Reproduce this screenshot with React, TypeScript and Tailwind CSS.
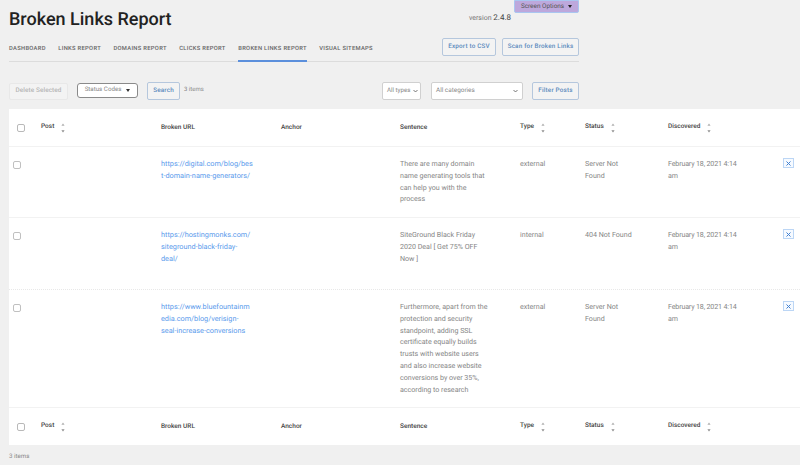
import React from "react";

const F = "font-['Roboto','Liberation_Sans',sans-serif] [text-rendering:geometricPrecision]";
const COLS = "grid-cols-[32px_120px_120px_119px_120px_65px_83px_115px_37px]";

function Sort() {
  return (
    <span className="flex flex-col items-center gap-[4px] w-[6px] mt-[1px]">
      <svg className="block" width="4" height="3" viewBox="0 0 4 3"><path d="M2 0.4 L3.6 2.8 L0.4 2.8 Z" fill="#b0b0b0" /></svg>
      <svg className="block" width="4" height="3" viewBox="0 0 4 3"><path d="M0.4 0.2 L3.6 0.2 L2 2.6 Z" fill="#8f8f8f" /></svg>
    </span>
  );
}

function Sortable({ label }: { label: string }) {
  return (
    <div className="flex items-start gap-[6px]">
      <span className="text-[6.5px] leading-[9px] text-[#444] font-medium">{label}</span>
      <Sort />
    </div>
  );
}

function HeadRow({ border, h }: { border: string; h: string }) {
  const t = "text-[6.5px] text-[#444] font-medium pt-[1px]";
  return (
    <div className={`grid ${COLS} ${h} items-center ${border}`}>
      <div className="pl-[8px]"><span className="block w-[8px] h-[8px] rounded-[2px] border border-[#b9b9b9] bg-white" /></div>
      <Sortable label="Post" />
      <div className={t}>Broken URL</div>
      <div className={t}>Anchor</div>
      <div className={t}>Sentence</div>
      <Sortable label="Type" />
      <Sortable label="Status" />
      <Sortable label="Discovered" />
      <div />
    </div>
  );
}

function Row({ url, sentence, type, status, h, border }: { url: string[]; sentence: string[]; type: string; status: string[]; h: string; border: string }) {
  const lines = (a: string[]) => a.map((l, i) => <div key={i}>{l}</div>);
  return (
    <div className={`grid ${COLS} pt-[11px] text-[7.1px] leading-[11.8px] text-[#858585] ${h} ${border}`}>
      <div className="pl-[4px] pt-[3px]"><span className="block w-[8px] h-[8px] rounded-[2px] border border-[#c0c0c0] bg-white" /></div>
      <div />
      <div className="text-[7.3px] text-[#5b9bec]">{lines(url)}</div>
      <div />
      <div>{lines(sentence)}</div>
      <div>{type}</div>
      <div>{lines(status)}</div>
      <div className="tracking-[-0.15px]">
        <div>February 18, 2021 4:14</div>
        <div>am</div>
      </div>
      <div>
        <span className="flex items-center justify-center w-[11px] h-[10px] border border-[#bcd6f5] bg-[#f6faff]">
          <svg className="block" width="5" height="5" viewBox="0 0 5 5"><path d="M0.5 0.5 L4.5 4.5 M4.5 0.5 L0.5 4.5" stroke="#3f7fd0" strokeWidth="1" /></svg>
        </span>
      </div>
    </div>
  );
}

function Btn({ children, w }: { children: React.ReactNode; w: string }) {
  return (
    <span className={`flex items-center justify-center h-[18px] ${w} rounded-[2px] border border-[#b5c7dd] text-[6.3px] tracking-[0.2px] font-medium text-[#5a8abd] bg-[#f3f3f3] whitespace-nowrap`}>
      {children}
    </span>
  );
}

function Chevron() {
  return <svg className="block shrink-0" width="5" height="4" viewBox="0 0 5 4"><path d="M0.5 1 L2.5 3 L4.5 1" fill="none" stroke="#555" strokeWidth="0.8" /></svg>;
}

export default function App() {
  const tab = "pt-[7px]";
  return (
    <div className={`relative w-[800px] h-[465px] overflow-hidden bg-[#f0f0f0] ${F}`}>
      <div className="absolute top-0 left-[514px] w-[65px] h-[13px] bg-[#bda8dc] border border-[#a9c6f0] rounded-b-[2px] flex items-center justify-center gap-[4px] text-[6.4px] text-[#555]">
        <span>Screen Options</span>
        <svg className="block" width="4" height="3" viewBox="0 0 4 3"><path d="M0 0 L4 0 L2 3 Z" fill="#222" /></svg>
      </div>

      <div className="flex flex-col w-[570px] ml-[9px]">
        <div className="flex justify-between h-[38px]">
          <h1 className="text-[18px] leading-[20px] mt-[10px] font-medium text-[#222]">Broken Links Report</h1>
          <div className="mt-[13px] mr-[68px] text-[7px] text-[#777] leading-[9px]">version <span className="text-[#444] text-[8px]">2.4.8</span></div>
        </div>
        <div className="flex justify-between items-start h-[24px] border-b border-[#dcdcdc]">
          <nav className="flex gap-[12.5px] text-[5.8px] tracking-[0.3px] uppercase text-[#666] font-medium h-[24px] whitespace-nowrap">
            <span className={tab}>Dashboard</span>
            <span className={tab}>Links Report</span>
            <span className={tab}>Domains Report</span>
            <span className={tab}>Clicks Report</span>
            <span className="pt-[7px] h-[24px] border-b-2 border-[#5b8fdc]">Broken Links Report</span>
            <span className={tab}>Visual Sitemaps</span>
          </nav>
          <div className="flex gap-[6px]">
            <Btn w="w-[54px]">Export to CSV</Btn>
            <Btn w="w-[77px]">Scan for Broken Links</Btn>
          </div>
        </div>

        <div className="flex items-center mt-[20px] h-[18px]">
          <span className="flex items-center justify-center w-[59px] h-[17px] rounded-[2px] border border-[#e8e8e8] bg-[#f3f3f3] text-[6.4px] tracking-[0.1px] font-medium text-[#b5b5b5] whitespace-nowrap">Delete Selected</span>
          <span className="ml-[9px] flex items-center justify-center gap-[5px] w-[61px] h-[15px] -mt-[2px] rounded-[3px] border border-[#8a8a8a] bg-white text-[6.2px] text-[#888] whitespace-nowrap">
            Status Codes
            <svg className="block" width="4" height="3" viewBox="0 0 4 3"><path d="M0 0 L4 0 L2 3 Z" fill="#333" /></svg>
          </span>
          <span className="ml-[9px]"><Btn w="w-[33px]">Search</Btn></span>
          <span className="ml-[4px] -mt-[4px] text-[6px] text-[#888]">3 items</span>
          <div className="ml-auto flex items-center">
            <span className="flex items-center justify-between w-[39px] h-[18px] pl-[4px] pr-[2px] rounded-[2px] border border-[#d0d0d0] bg-white text-[6.2px] text-[#888] whitespace-nowrap">
              All types
              <Chevron />
            </span>
            <span className="ml-[10px] flex items-center justify-between w-[92px] h-[18px] pl-[4px] pr-[4px] rounded-[2px] border border-[#d0d0d0] bg-white text-[6.4px] text-[#888] whitespace-nowrap">
              All categories
              <Chevron />
            </span>
            <span className="ml-[9px]"><Btn w="w-[47px]">Filter Posts</Btn></span>
          </div>
        </div>
      </div>

      <div className="ml-[9px] mt-[9px] bg-white">
        <HeadRow h="h-[38px]" border="border-b border-[#f2f2f2]" />
        <Row h="h-[71px]" border="border-b border-[#f2f2f2]"
          url={["https://digital.com/blog/bes", "t-domain-name-generators/"]}
          sentence={["There are many domain", "name generating tools that", "can help you with the", "process"]}
          type="external" status={["Server Not", "Found"]} />
        <Row h="h-[72px]" border="border-b border-dotted border-[#e8e8e8]"
          url={["https://hostingmonks.com/", "siteground-black-friday-", "deal/"]}
          sentence={["SiteGround Black Friday", "2020 Deal [ Get 75% OFF", "Now ]"]}
          type="internal" status={["404 Not Found"]} />
        <Row h="h-[118px]" border="border-b border-[#f2f2f2]"
          url={["https://www.bluefountainm", "edia.com/blog/verisign-", "seal-increase-conversions"]}
          sentence={["Furthermore, apart from the", "protection and security", "standpoint, adding SSL", "certificate equally builds", "trusts with website users", "and also increase website", "conversions by over 35%,", "according to research"]}
          type="external" status={["Server Not", "Found"]} />
        <HeadRow h="h-[37px]" border="" />
      </div>
      <div className="ml-[9px] mt-[7px] text-[6.2px] text-[#888]">3 items</div>
    </div>
  );
}
